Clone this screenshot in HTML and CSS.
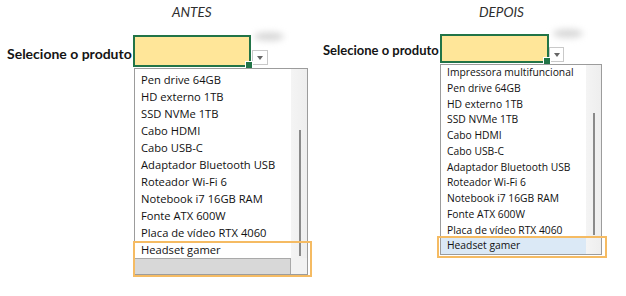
FILE: index.html
```html
<!DOCTYPE html>
<html lang="pt-BR">
<head>
<meta charset="utf-8">
<title>Antes e depois</title>
<link rel="stylesheet" href="styles.css">
</head>
<body>
<div class="page">
  <section class="panel panel-antes">
    <h2 class="title">ANTES</h2>
    <span class="label">Selecione o produto</span>
    <div class="combo">
      <div class="cell"></div>
      <div class="arrow"></div>
    </div>
    <div class="list">
      <div class="list-body">
        <ul class="items">
          <li>Pen drive 64GB</li>
          <li>HD externo 1TB</li>
          <li>SSD NVMe 1TB</li>
          <li>Cabo HDMI</li>
          <li>Cabo USB-C</li>
          <li>Adaptador Bluetooth USB</li>
          <li>Roteador Wi-Fi 6</li>
          <li>Notebook i7 16GB RAM</li>
          <li>Fonte ATX 600W</li>
          <li>Placa de vídeo RTX 4060</li>
          <li>Headset gamer</li>
        </ul>
        <div class="vscroll"><div class="thumb"></div></div>
      </div>
      <div class="hscroll"><div class="hbar"></div><div class="corner"></div></div>
      <div class="mark"></div>
    </div>
  </section>

  <section class="panel panel-depois">
    <h2 class="title">DEPOIS</h2>
    <span class="label">Selecione o produto</span>
    <div class="combo">
      <div class="cell"></div>
      <div class="arrow"></div>
    </div>
    <div class="list">
      <div class="list-body">
        <ul class="items">
          <li>Impressora multifuncional</li>
          <li>Pen drive 64GB</li>
          <li>HD externo 1TB</li>
          <li>SSD NVMe 1TB</li>
          <li>Cabo HDMI</li>
          <li>Cabo USB-C</li>
          <li>Adaptador Bluetooth USB</li>
          <li>Roteador Wi-Fi 6</li>
          <li>Notebook i7 16GB RAM</li>
          <li>Fonte ATX 600W</li>
          <li>Placa de vídeo RTX 4060</li>
          <li class="selected">Headset gamer</li>
        </ul>
        <div class="vscroll"><div class="thumb"></div></div>
      </div>
      <div class="mark"></div>
    </div>
  </section>
</div>
</body>
</html>
```

FILE: styles.css
```css
* { box-sizing: border-box; }

html, body {
  margin: 0;
  background: #ffffff;
}

body {
  width: 626px;
  height: 296px;
  overflow: hidden;
  font-family: "Open Sans", "Noto Sans", sans-serif;
  color: #1e1e1e;
}

.page {
  display: flex;
  align-items: flex-start;
  padding: 4px 0 0 7px;
}

.panel {
  display: grid;
  align-content: start;
}

.panel-antes {
  width: 316px;
  grid-template-columns: 126px auto;
}

.panel-depois {
  grid-template-columns: 117px auto;
}

.title {
  grid-column: 1 / -1;
  margin: 0;
  font-family: "Lato", "Open Sans", sans-serif;
  font-style: italic;
  font-weight: 400;
  font-size: 13.5px;
  line-height: 16px;
  color: #2e2e2e;
}

.panel-antes .title { padding-left: 165px; }
.panel-depois .title { padding-left: 156px; }

.label {
  align-self: end;
  font-family: "Lato", "Open Sans", sans-serif;
  font-weight: 700;
  color: #141414;
  white-space: nowrap;
}

.panel-antes .label {
  font-size: 14px;
  line-height: 17px;
  margin-bottom: 5px;
}

.panel-depois .label {
  font-size: 13px;
  line-height: 16px;
  margin-bottom: 5px;
}

.combo {
  position: relative;
  display: flex;
  align-items: flex-end;
}

.combo::before {
  content: "";
  position: absolute;
  top: -3px;
  width: 30px;
  height: 9px;
  border-radius: 50%;
  background: #d9d9d9;
  filter: blur(3px);
}

.panel-antes .combo { margin-top: 15px; }
.panel-antes .combo::before { left: 121px; }
.panel-depois .combo { margin-top: 14px; }
.panel-depois .combo::before { left: 113px; top: -5px; }

.cell {
  position: relative;
  background: #ffe699;
  border: 2px solid #227447;
}

.cell::after {
  content: "";
  position: absolute;
  right: -4px;
  bottom: -4px;
  width: 6px;
  height: 6px;
  background: #227447;
  border: 1px solid #ffffff;
}

.panel-antes .cell { width: 118px; height: 32px; }
.panel-depois .cell { width: 109px; height: 29px; }

.arrow {
  display: flex;
  align-items: center;
  justify-content: center;
  background: #ffffff;
  border: 1px solid #c9c9c9;
}

.arrow::after {
  content: "";
  border-left: 3.5px solid transparent;
  border-right: 3.5px solid transparent;
  border-top: 4px solid #666666;
}

.panel-antes .arrow { width: 16px; height: 15px; margin: 0 0 2px 1px; }
.panel-depois .arrow { width: 15px; height: 15px; margin: 0 0 1px 0; }

.list {
  grid-column: 2;
  position: relative;
  display: flex;
  flex-direction: column;
  background: #ffffff;
  border: 1px solid #9c9c9c;
  margin-top: 1px;
}

.panel-antes .list { width: 174px; margin-left: 1px; }
.panel-depois .list { width: 162px; }

.list-body {
  display: flex;
}

.items {
  flex: 1;
  margin: 0;
  list-style: none;
}

.items li {
  white-space: nowrap;
  color: #111111;
}

.panel-antes .items {
  padding: 2px 0 0 6px;
  font-size: 11.2px;
  line-height: 17px;
}

.panel-depois .items {
  padding: 0;
  font-size: 10.3px;
  line-height: 15.76px;
}

.panel-depois .items li { padding-left: 6px; }

.items li.selected {
  background: #dbe9f6;
}

.vscroll {
  display: flex;
  background: linear-gradient(to right, #f4f4f4, #eeeeee);
}

.thumb {
  width: 2px;
  height: 100%;
  background: #8a8a8a;
}

.panel-antes .vscroll { width: 16px; padding: 61px 0 2px 8px; }
.panel-depois .vscroll { width: 15px; padding: 48px 0 19px 7px; }

.hscroll {
  display: flex;
  height: 16px;
}

.hbar {
  flex: 1;
  background: #d8d8d8;
  border-top: 1px solid #a9a9a9;
  border-right: 1px solid #a9a9a9;
}

.corner {
  width: 16px;
  background: #f2f2f2;
}

.mark {
  position: absolute;
  border: 2px solid #f5bb63;
}

.panel-antes .mark {
  left: -2px;
  right: -5px;
  bottom: -3px;
  height: 36px;
}

.panel-depois .mark {
  left: -4px;
  right: -6px;
  bottom: -4px;
  height: 22px;
}
```
